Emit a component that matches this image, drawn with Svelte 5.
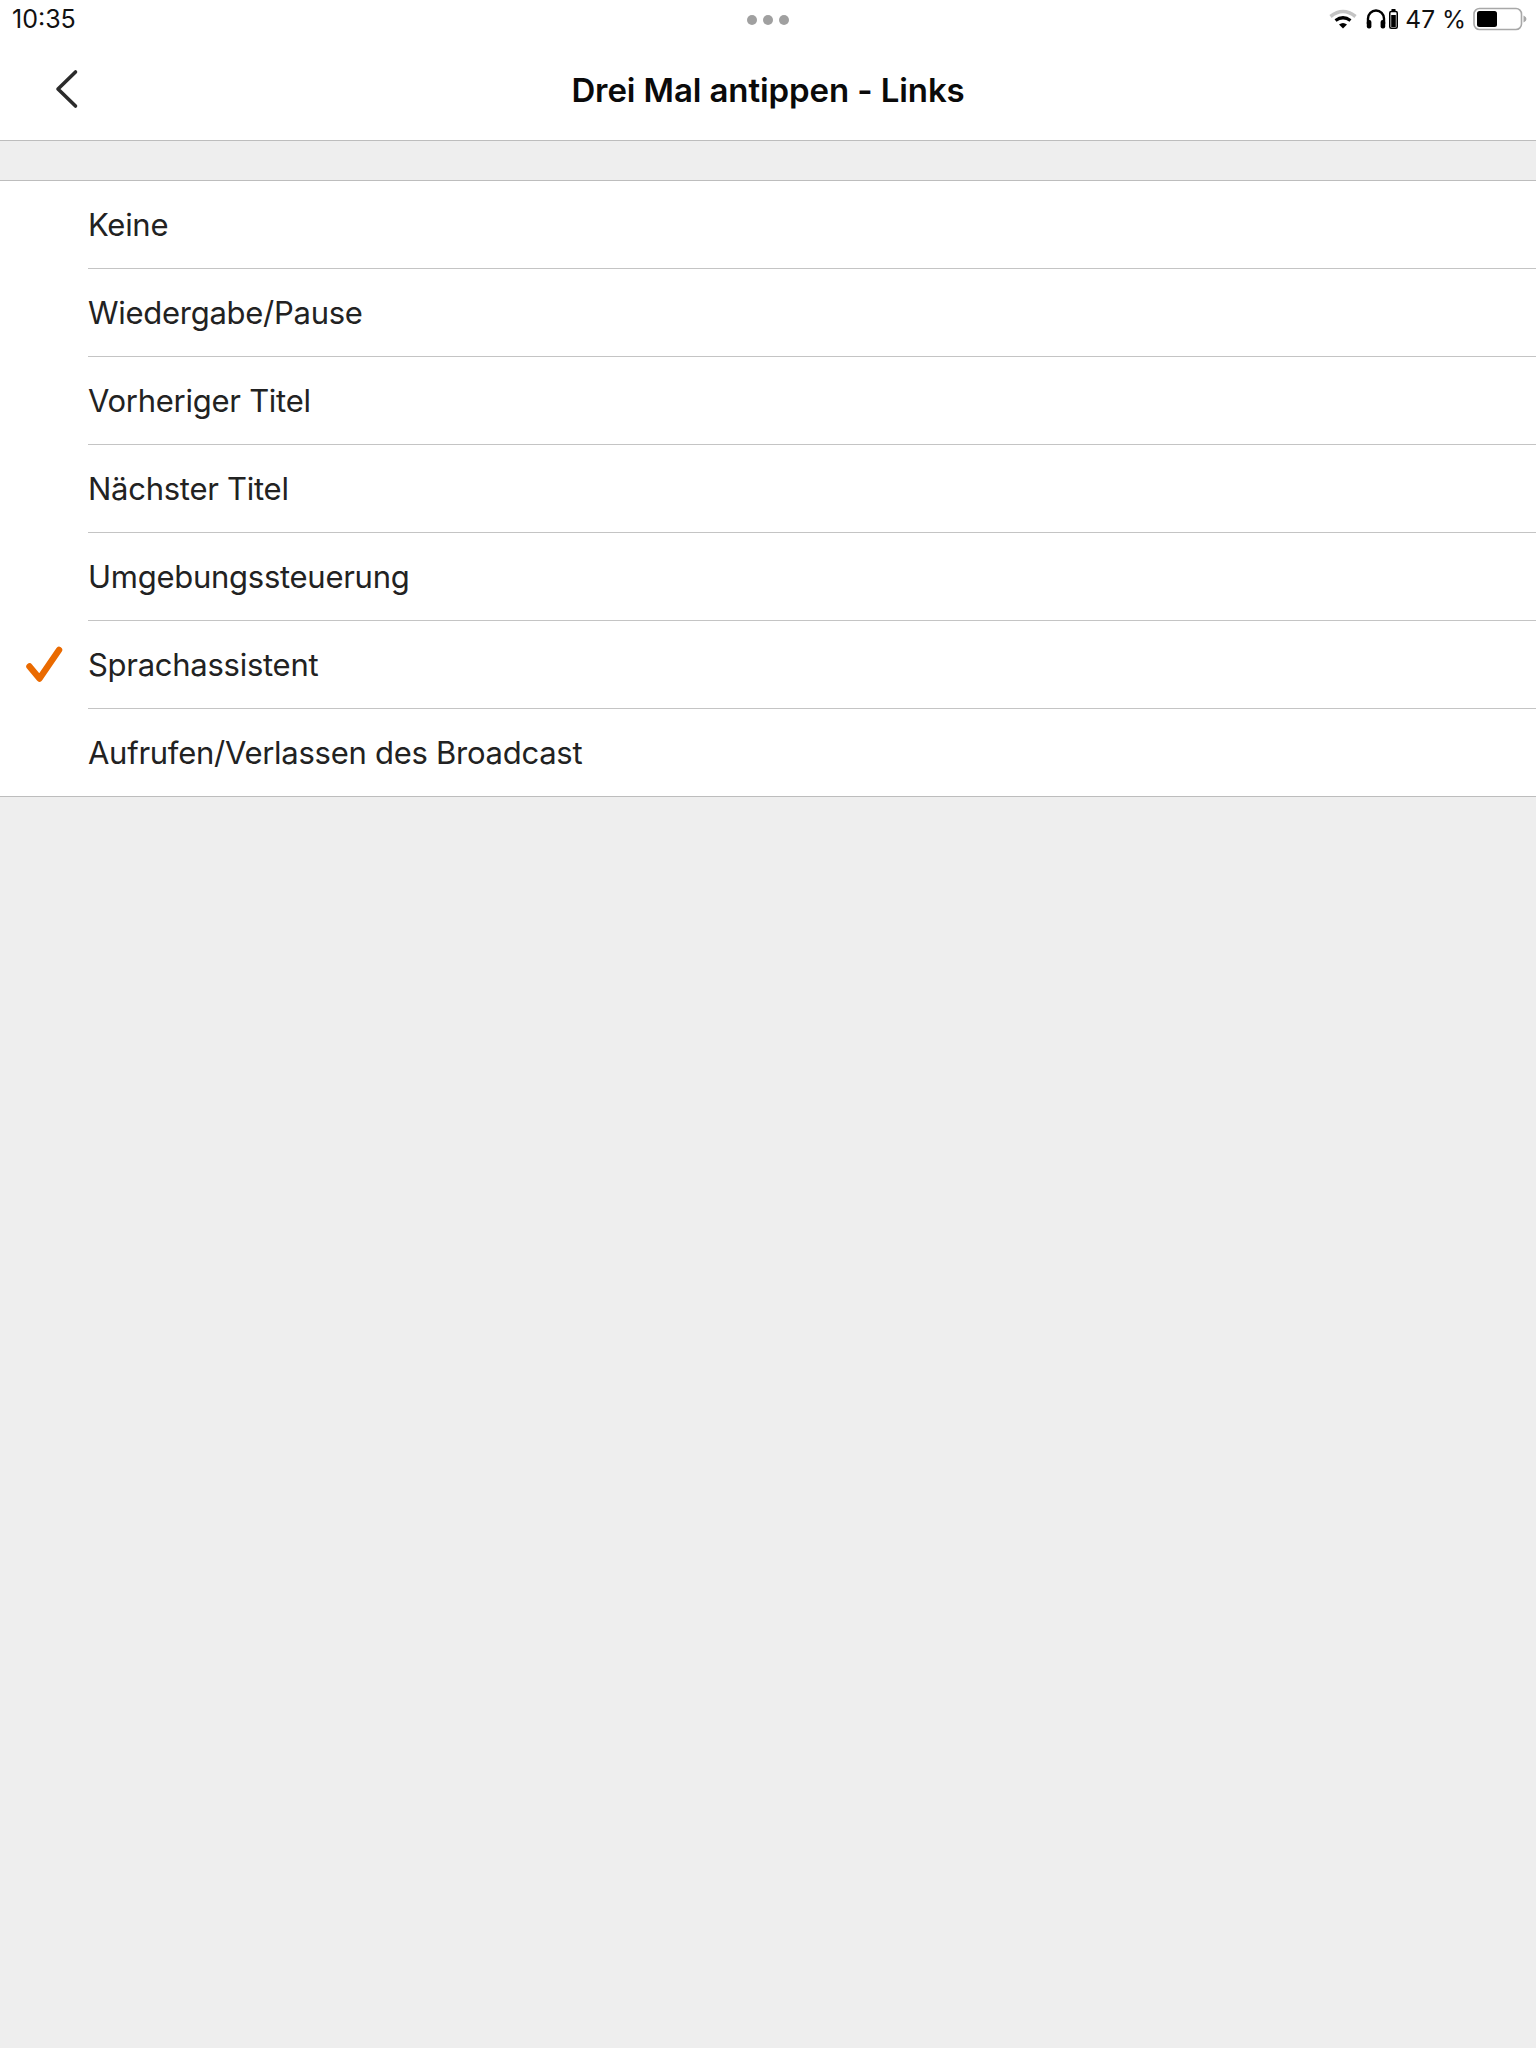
<script>
  const options = [
    { name: "Keine" },
    { name: "Wiedergabe/Pause" },
    { name: "Vorheriger Titel" },
    { name: "Nächster Titel" },
    { name: "Umgebungssteuerung" },
    { name: "Sprachassistent", selected: true },
    { name: "Aufrufen/Verlassen des Broadcast" }
  ];
</script>

<div class="page">
  <div class="status">
    <span class="time">10:35</span>
    <div class="dots"><i></i><i></i><i></i></div>
    <div class="indicators">
      <svg class="wifi" width="28" height="20" viewBox="0 0 28 20">
        <path d="M1.5 7.5 Q14 -2.5 26.5 7.5" fill="none" stroke="#c4c4c4" stroke-width="3.6" />
        <path d="M6.5 11.5 Q14 6 21.5 11.5" fill="none" stroke="#000" stroke-width="3.2" />
        <path d="M10 15.5 Q14 12.5 18 15.5 L14 19.5 Z" fill="#000" />
      </svg>
      <svg class="phones" width="20" height="20" viewBox="0 0 20 20">
        <path d="M2 15 V9.5 A8 8 0 0 1 18 9.5 V15" fill="none" stroke="#000" stroke-width="2.4" />
        <rect x="0.8" y="11" width="4.6" height="8.5" rx="2" fill="#000" />
        <rect x="14.6" y="11" width="4.6" height="8.5" rx="2" fill="#000" />
      </svg>
      <svg class="mini" width="9" height="20" viewBox="0 0 9 20">
        <rect x="2.5" y="0" width="4" height="3" fill="#000" />
        <rect x="0.75" y="2.5" width="7.5" height="16.75" rx="1.5" fill="#fff" stroke="#000" stroke-width="1.5" />
        <rect x="2.2" y="6" width="4.6" height="12" fill="#000" />
      </svg>
      <span class="pct">47 %</span>
      <svg class="battery" width="54" height="24" viewBox="0 0 54 24">
        <rect x="1" y="1.5" width="47.5" height="21" rx="5.5" fill="#fff" stroke="#a8a8a8" stroke-width="1.6" />
        <rect x="4" y="4" width="20" height="16" rx="2.5" fill="#000" />
        <path d="M50.5 8.5 Q53.5 10 53.5 12 Q53.5 14 50.5 15.5 Z" fill="#a8a8a8" />
      </svg>
    </div>
  </div>

  <header class="nav">
    <svg class="back" width="24" height="42" viewBox="0 0 24 42">
      <path d="M20.5 3 L3 20 L20.5 37" fill="none" stroke="#2b2b2b" stroke-width="3.6" stroke-linecap="round" stroke-linejoin="round" />
    </svg>
    <h1>Drei Mal antippen - Links</h1>
  </header>

  <ul class="list">
    {#each options as opt}
      <li class="row">
        {#if opt.selected}
          <svg class="check" width="38" height="40" viewBox="0 0 38 40">
            <path d="M4.5 20.5 L14.5 32.5 L34 4" fill="none" stroke="#ea6a00" stroke-width="6.5" stroke-linecap="round" stroke-linejoin="round" />
          </svg>
        {/if}
        <span class="label">{opt.name}</span>
      </li>
    {/each}
  </ul>
</div>

<style>
  :global(body) {
    margin: 0;
    background: #eeeeee;
  }

  .page {
    height: 2048px;
    background: #eeeeee;
    font-family: Inter, "Liberation Sans", sans-serif;
    overflow: hidden;
  }

  .status {
    position: relative;
    height: 38px;
    background: #fff;
    display: flex;
    align-items: center;
    justify-content: space-between;
    padding: 0 9px 0 12px;
  }

  .time {
    font-size: 25px;
    color: #111;
  }

  .dots {
    position: absolute;
    left: 747px;
    top: 15px;
    display: flex;
    gap: 6px;
  }

  .dots i {
    width: 10px;
    height: 10px;
    border-radius: 50%;
    background: #a0a0a0;
  }

  .indicators {
    display: flex;
    align-items: center;
  }

  .wifi { margin-right: 9px; }
  .phones { margin-right: 3px; }
  .mini { margin-right: 7px; }

  .pct {
    font-size: 24.5px;
    color: #111;
    margin-right: 7px;
  }

  .nav {
    position: relative;
    height: 102px;
    background: #fff;
    border-bottom: 1px solid #bdbdbd;
    display: flex;
    align-items: center;
    justify-content: center;
  }

  .back {
    position: absolute;
    left: 55px;
    top: 31px;
  }

  h1 {
    margin: 0;
    font-size: 33px;
    font-weight: 600;
    letter-spacing: -0.1px;
    color: #0a0a0a;
    position: relative;
    top: 1px;
  }

  .list {
    list-style: none;
    margin: 39px 0 0;
    padding: 0 0 0 88px;
    background: #fff;
    border-top: 1px solid #bdbdbd;
    border-bottom: 1px solid #bdbdbd;
  }

  .row {
    position: relative;
    height: 87px;
    display: flex;
    align-items: center;
    border-bottom: 1px solid #c4c4c4;
  }

  .row:last-child {
    border-bottom: none;
  }

  .label {
    font-size: 31px;
    letter-spacing: -0.27px;
    color: #222;
  }

  .check {
    position: absolute;
    left: -63px;
    top: 25px;
  }
</style>
